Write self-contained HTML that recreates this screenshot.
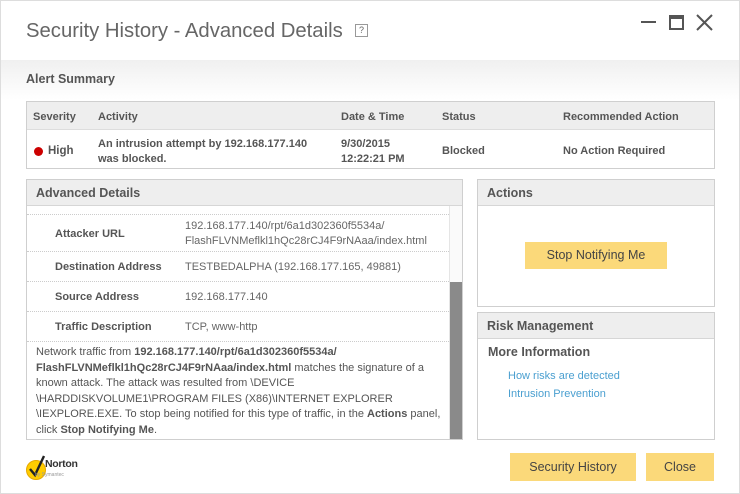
<!DOCTYPE html>
<html><head><style>
*{box-sizing:border-box;margin:0;padding:0}
body{width:740px;height:494px;overflow:hidden;font-family:"Liberation Sans",sans-serif;color:#555;background:#fff;position:relative;font-size:11px}
.a{position:absolute}
.hd{background:#eeeeee;border-bottom:1px solid #d6d6d6;font-weight:bold;font-size:12.5px;color:#555;padding:6px 9px;height:26px}
.pan{position:absolute;border:1px solid #cfcfcf;background:#fff}
.btn{position:absolute;background:#fbd97a;color:#444;font-size:12.5px;text-align:center}
.row{position:absolute;left:0;width:422px;border-bottom:1px dotted #ccc}
.lab{position:absolute;left:28px;font-weight:bold;color:#555;font-size:11px}
.val{position:absolute;left:158px;color:#666;font-size:11px;line-height:15px}
</style></head><body>
<div class="a" style="left:0;top:0;width:740px;height:494px;border:1px solid #ddd"></div>
<div class="a" style="left:1px;top:60px;width:738px;height:40px;background:linear-gradient(#f0f0f0,#fff)"></div>
<div class="a" style="left:26px;top:20px;font-size:20.3px;color:#666">Security History - Advanced Details</div>
<div class="a" style="left:355px;top:24px;width:13px;height:13px;border:1px solid #999;font-size:9px;text-align:center;line-height:11px;color:#666">?</div>
<div class="a" style="left:641px;top:21px;width:15px;height:2px;background:#555"></div>
<div class="a" style="left:669px;top:15px;width:15px;height:15px;border:2px solid #555;border-top-width:4px"></div>
<svg class="a" style="left:696px;top:14px" width="17" height="17"><path d="M1 1L16 16M16 1L1 16" stroke="#555" stroke-width="2"/></svg>
<div class="a" style="left:26px;top:72px;font-weight:bold;font-size:12.5px;color:#555">Alert Summary</div>
<div class="pan" style="left:26px;top:101px;width:689px;height:68px">
 <div style="height:28px;background:#eee;border-bottom:1px solid #ddd"></div>
 <div class="a" style="top:9px;left:6px;font-weight:bold">Severity</div>
 <div class="a" style="top:9px;left:71px;font-weight:bold">Activity</div>
 <div class="a" style="top:9px;left:314px;font-weight:bold">Date &amp; Time</div>
 <div class="a" style="top:9px;left:415px;font-weight:bold">Status</div>
 <div class="a" style="top:9px;left:536px;font-weight:bold">Recommended Action</div>
 <div class="a" style="top:45px;left:7px;width:9px;height:9px;border-radius:50%;background:#c00"></div>
 <div class="a" style="top:43px;left:21px;font-weight:bold;font-size:11.5px">High</div>
 <div class="a" style="top:35px;left:71px;font-weight:bold;line-height:15px">An intrusion attempt by 192.168.177.140<br>was blocked.</div>
 <div class="a" style="top:35px;left:314px;font-weight:bold;line-height:15px">9/30/2015<br>12:22:21 PM</div>
 <div class="a" style="top:43px;left:415px;font-weight:bold">Blocked</div>
 <div class="a" style="top:43px;left:536px;font-weight:bold">No Action Required</div>
</div>
<div class="pan" style="left:26px;top:179px;width:437px;height:261px;overflow:hidden">
 <div class="hd">Advanced Details</div>
 <div class="row" style="top:26px;height:9px"></div>
 <div class="row" style="top:35px;height:37px"><div class="lab" style="top:13px">Attacker URL</div><div class="val" style="top:4px">192.168.177.140/rpt/6a1d302360f5534a/<br>FlashFLVNMeflkl1hQc28rCJ4F9rNAaa/index.html</div></div>
 <div class="row" style="top:72px;height:30px"><div class="lab" style="top:9px">Destination Address</div><div class="val" style="top:8px">TESTBEDALPHA (192.168.177.165, 49881)</div></div>
 <div class="row" style="top:102px;height:30px"><div class="lab" style="top:9px">Source Address</div><div class="val" style="top:8px">192.168.177.140</div></div>
 <div class="row" style="top:132px;height:30px"><div class="lab" style="top:9px">Traffic Description</div><div class="val" style="top:8px">TCP, www-http</div></div>
 <div class="a" style="top:165px;left:9px;width:410px;line-height:15.5px;color:#555;font-size:11px">Network traffic from <b>192.168.177.140/rpt/6a1d302360f5534a/ FlashFLVNMeflkl1hQc28rCJ4F9rNAaa/index.html</b> matches the signature of a known attack. The attack was resulted from \DEVICE \HARDDISKVOLUME1\PROGRAM FILES (X86)\INTERNET EXPLORER \IEXPLORE.EXE. To stop being notified for this type of traffic, in the <b>Actions</b> panel, click <b>Stop Notifying Me</b>.</div>
 <div class="a" style="left:422px;top:26px;width:13px;height:235px;background:#fafafa;border-left:1px solid #e5e5e5"></div>
 <div class="a" style="left:423px;top:102px;width:12px;height:160px;background:#8a8a8a"></div>
</div>
<div class="pan" style="left:477px;top:179px;width:238px;height:128px">
 <div class="hd">Actions</div>
 <div class="btn" style="left:47px;top:62px;width:142px;height:27px;line-height:27px">Stop Notifying Me</div>
</div>
<div class="pan" style="left:477px;top:312px;width:238px;height:128px">
 <div class="hd">Risk Management</div>
 <div class="a" style="left:10px;top:32px;font-weight:bold;font-size:12.5px">More Information</div>
 <div class="a" style="left:30px;top:54px;color:#4a9fd0;line-height:18px">How risks are detected<br>Intrusion Prevention</div>
</div>
<svg class="a" style="left:25px;top:455px" width="40" height="28"><circle cx="11" cy="15" r="9.5" fill="#fc0" stroke="#e6a800"/><path d="M5 14l5 6 9-19" stroke="#222" stroke-width="2.4" fill="none"/></svg>
<div class="a" style="left:45px;top:458px;font-size:10.5px;font-weight:bold;color:#333;letter-spacing:-.3px">Norton</div>
<div class="a" style="left:35px;top:472px;font-size:5px;color:#999">by Symantec</div>
<div class="btn" style="left:510px;top:453px;width:126px;height:28px;line-height:28px">Security History</div>
<div class="btn" style="left:646px;top:453px;width:68px;height:28px;line-height:28px">Close</div>
</body></html>
